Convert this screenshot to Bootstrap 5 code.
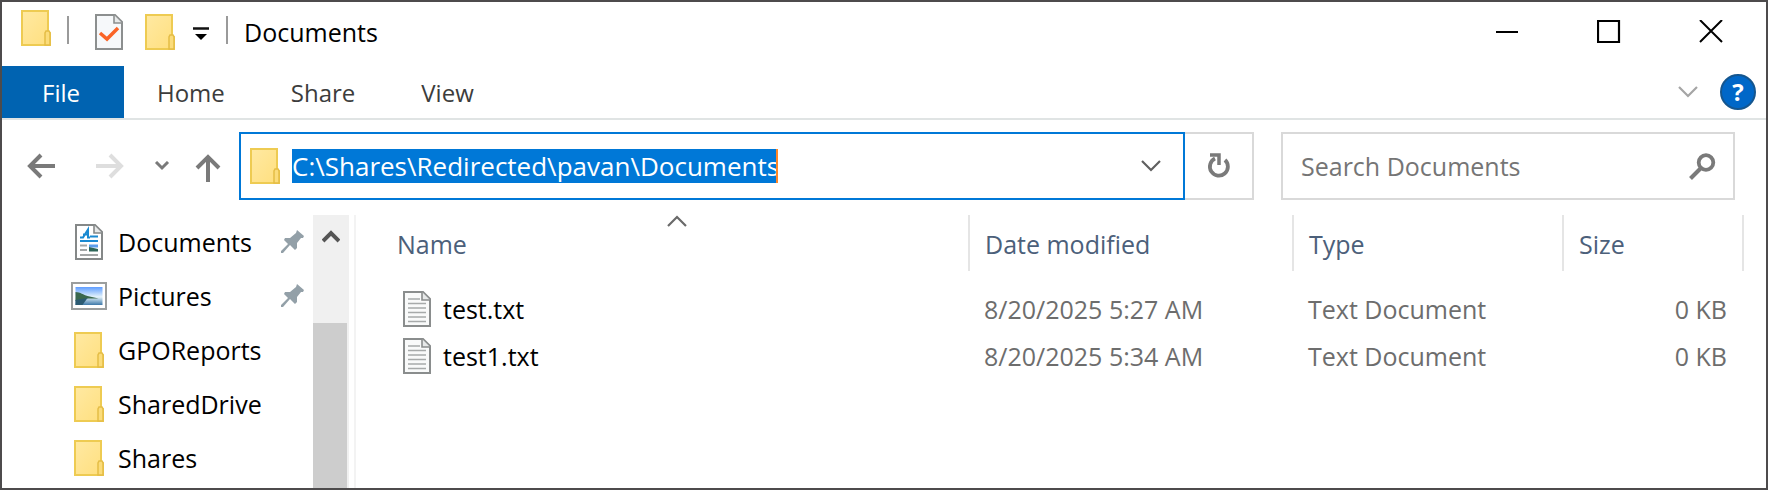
<!DOCTYPE html>
<html lang="en">
<head>
<meta charset="utf-8">
<meta name="viewport" content="width=device-width, initial-scale=1">
<title>Documents</title>
<link rel="stylesheet" href="https://cdn.jsdelivr.net/npm/bootstrap@5.3.0/dist/css/bootstrap.min.css">
<style>
  body { font-family: "Open Sans", "Noto Sans", sans-serif; font-size: 25px; line-height: 34px; color: #000; background: #fff; }
  .explorer { min-height: 100vh; border: 2px solid #4d4b4c; }
  button, input, a { font: inherit; }
  button { border: 0; padding: 0; background: transparent; color: inherit; }
  svg { display: block; flex: none; }
  .title-bar { height: 64px; padding-left: 19px; }
  .win-title { font-size: 25px; line-height: 60px; }
  .divider { width: 2px; height: 28px; background: #9a9a9a; }
  .quick { margin: 0 17px 0 26px; gap: 18px; }
  .win-btn { width: 102px; height: 60px; }
  .ribbon { height: 54px; border-bottom: 2px solid #e0e4e4; font-size: 24px; }
  .ribbon a { color: #3c3c3c; text-decoration: none; padding: 2px 33px 0 33px; }
  .ribbon a.file-tab { background: #0063b1; color: #fff; padding: 2px 44px 0 40px; }
  .help { width: 36px; height: 36px; margin-left: 22px; border-radius: 50%; background: #0067c8; border: 2px solid #15568f; color: #fff; font-weight: 700; line-height: 32px; }
  .ribbon-tools { padding-right: 10px; }
  .nav-row { padding: 12px 31px 15px 25px; }
  .arrows { width: 212px; padding-right: 18px; }
  .field-box { height: 68px; border: 2px solid #d9d9d9; }
  .address { border-color: #0078d7; padding: 0 22px 0 9px; }
  .address input { width: 486px; height: 34px; padding: 0; border: 0; border-right: 2px solid #ff8728; background: #0078d7; color: #fff; outline: 0; margin-left: 12px; font-size: 26px; }
  .refresh { width: 69px; border-left: 0; }
  .search { width: 454px; margin-left: 27px; padding: 0 17px 0 18px; }
  .search input { min-width: 0; border: 0; padding: 0; outline: 0; color: #6d6d6d; }
  .search input::placeholder { color: #757575; opacity: 1; }
  .side { width: 311px; flex: none; }
  .side a { height: 54px; color: #000; text-decoration: none; padding: 0 8px 0 69px; }
  .side .ico { width: 36px; margin-right: 11px; }
  .scroll { width: 36px; flex: none; background: #f0f0f0; }
  .scroll .thumb { width: 34px; background: #cdcdcd; }
  .scroll button { height: 108px; padding-top: 14px; }
  .pane { min-width: 0; border-left: 2px solid #f3f3f3; margin-left: 5px; padding-right: 22px; }
  .files { width: 100%; table-layout: fixed; color: #6d6d6d; }
  .files th { height: 56px; font-weight: 400; color: #4c607a; border-right: 2px solid #e5e5e5; padding: 2px 0 0 15px; position: relative; }
  .files th:first-child { padding-left: 41px; }
  .files td { height: 47px; padding: 0 0 0 15px; }
  .files td:first-child { padding-left: 47px; color: #000; }
  .files td:last-child { padding: 0 16px 0 0; text-align: right; }
  .files .gap-row td { height: 14px; }
  .sort { position: absolute; top: 0; left: 311px; }
  .c-date { width: 324px; } .c-type { width: 270px; } .c-size { width: 180px; }
</style>
</head>
<body>
<svg width="0" height="0" class="position-absolute" aria-hidden="true">
  <defs>
    <linearGradient id="yel" x1="0" y1="0" x2="1" y2="1"><stop offset="0" stop-color="#ffe9a2"/><stop offset="1" stop-color="#ffdf7e"/></linearGradient>
    <linearGradient id="sky" x1="0" y1="0" x2="0" y2="1"><stop offset="0" stop-color="#5e9dff"/><stop offset=".55" stop-color="#e4f3fb"/><stop offset="1" stop-color="#3d78a8"/></linearGradient>
    <symbol id="folder" viewBox="0 0 30 36"><path d="M1 1h26v20l2 2v12H1z" fill="url(#yel)" stroke="#eecb52" stroke-width="2"/><path d="M24 35V23l1-2h3l1 2v12z" fill="#fbdc7b" stroke="#e5bd46" stroke-width="1.5"/></symbol>
    <symbol id="textdoc" viewBox="0 0 28 36"><path d="M1 1h19l7 7v27H1z" fill="#f9fafa" stroke="#8a8d8d" stroke-width="2"/><path d="M19 1v8h8" fill="#e7e9e9" stroke="#8a8d8d" stroke-width="1.6"/><path d="M5 8h12M5 12.500h18M5 17h18M5 21.500h18M5 26h18M5 30.500h18" stroke="#a7aaaa" stroke-width="1.7"/></symbol>
    <symbol id="pin" viewBox="0 0 24 24"><path d="M16 0l7 6-1 2-2 0-4 5 0 5-2 2-5-5-7 8-2 0 0-2 7-7-4-4 1-2 5 0 6-5z" fill="#93a0a8"/></symbol>
  </defs>
</svg>
<div class="explorer d-flex flex-column">
  <header class="title-bar d-flex align-items-start">
    <div class="d-flex align-items-center pt-2 h-100 pb-3">
      <svg width="30" height="36" class="mb-1"><use href="#folder"/></svg>
      <span class="divider ms-3"></span>
      <div class="quick d-flex align-items-center pt-1">
        <button aria-label="Properties"><svg width="28" height="36" viewBox="0 0 28 36"><path d="M1 1h19l7 7v27H1z" fill="#f6f8fa" stroke="#8c8f8f" stroke-width="2"/><path d="M19 1v8h8" fill="#e7e9e9" stroke="#8c8f8f" stroke-width="1.6"/><path d="M5 19l7 6 11-11" fill="none" stroke="#fa6427" stroke-width="3.500"/></svg></button>
        <button class="ms-1" aria-label="New folder"><svg width="30" height="36"><use href="#folder"/></svg></button>
        <button aria-label="Customize Quick Access Toolbar"><svg width="16" height="14" viewBox="0 0 16 14" class="mt-1"><path d="M0 1.500h16" stroke="#111" stroke-width="2.500"/><path d="M2 7h12l-6 6z" fill="#000"/></svg></button>
      </div>
      <span class="divider"></span>
    </div>
    <h1 class="win-title m-0 ms-3 fw-normal">Documents</h1>
    <div class="d-flex ms-auto me-1">
      <button class="win-btn d-flex align-items-center justify-content-center" aria-label="Minimize"><svg width="24" height="24" viewBox="0 0 24 24"><path d="M1 12h22" stroke="#000" stroke-width="2"/></svg></button>
      <button class="win-btn d-flex align-items-center justify-content-center" aria-label="Maximize"><svg width="24" height="24" viewBox="0 0 24 24"><path d="M1 1h21v21H1z" fill="none" stroke="#000" stroke-width="2.200"/></svg></button>
      <button class="win-btn d-flex align-items-center justify-content-center" aria-label="Close"><svg width="24" height="24" viewBox="0 0 24 24"><path d="M1 0l22 22M23 0L1 22" stroke="#000" stroke-width="2"/></svg></button>
    </div>
  </header>
  <nav class="ribbon d-flex" aria-label="Ribbon">
    <a class="file-tab d-flex align-items-center" href="#">File</a>
    <a class="d-flex align-items-center" href="#">Home</a>
    <a class="d-flex align-items-center" href="#">Share</a>
    <a class="d-flex align-items-center" href="#">View</a>
    <div class="ribbon-tools d-flex align-items-center ms-auto">
      <button aria-label="Expand the Ribbon"><svg width="20" height="12" viewBox="0 0 20 12"><path d="M1 1l9 9 9-9" fill="none" stroke="#a5a5a5" stroke-width="2.200"/></svg></button>
      <button class="help" aria-label="Help">?</button>
    </div>
  </nav>
  <div class="nav-row d-flex align-items-center">
    <div class="arrows d-flex align-items-center justify-content-between">
      <button aria-label="Back"><svg width="28" height="26" viewBox="0 0 28 26"><path d="M28 13H3M14 2L3 13l11 11" fill="none" stroke="#7a7a7a" stroke-width="4"/></svg></button>
      <button class="ms-4 ps-3" aria-label="Forward"><svg width="28" height="26" viewBox="0 0 28 26"><path d="M0 13h25M14 2l11 11-11 11" fill="none" stroke="#dedede" stroke-width="4"/></svg></button>
      <button class="ms-4 ps-1" aria-label="Recent locations"><svg width="16" height="10" viewBox="0 0 16 10"><path d="M2 1l6 6 6-6" fill="none" stroke="#7a7a7a" stroke-width="3"/></svg></button>
      <button class="ms-4" aria-label="Up"><svg width="26" height="28" viewBox="0 0 26 28" class="mt-1"><path d="M13 28V3M2 14L13 3l11 11" fill="none" stroke="#7a7a7a" stroke-width="4"/></svg></button>
    </div>
    <div class="field-box address flex-fill d-flex align-items-center">
      <svg width="30" height="36"><use href="#folder"/></svg>
      <input type="text" aria-label="Address" value="C:\Shares\Redirected\pavan\Documents">
      <button class="ms-auto" aria-label="Previous locations"><svg width="20" height="12" viewBox="0 0 20 12"><path d="M1 1l9 9 9-9" fill="none" stroke="#606060" stroke-width="2.200"/></svg></button>
    </div>
    <button class="field-box refresh d-flex align-items-center justify-content-center" aria-label="Refresh"><svg width="24" height="27" viewBox="0 0 24 27"><path d="M18 7a9 9 0 1 1-10-1.500" fill="none" stroke="#7a7a7a" stroke-width="3.800"/><path d="M3 2h9v10" fill="none" stroke="#7a7a7a" stroke-width="3.500"/></svg></button>
    <div class="field-box search d-flex align-items-center">
      <input class="flex-fill" type="search" aria-label="Search Documents" placeholder="Search Documents">
      <button aria-label="Search"><svg width="27" height="27" viewBox="0 0 27 27"><circle cx="17" cy="9.500" r="7.300" fill="none" stroke="#7a7a7a" stroke-width="3.800"/><path d="M12 15L1.500 25.500" stroke="#7a7a7a" stroke-width="4"/></svg></button>
    </div>
  </div>
  <main class="d-flex flex-fill">
    <nav class="side" aria-label="Navigation pane">
      <a class="d-flex align-items-center" href="#"><span class="ico d-flex justify-content-center"><svg width="28" height="36" viewBox="0 0 28 36"><path d="M1 1h19l7 7v27H1z" fill="#fff" stroke="#858888" stroke-width="2"/><path d="M19 1v8h8" fill="#e7e9e9" stroke="#858888" stroke-width="1.600"/><path d="M5 13.500h3l5-8v8h2M8 10.500h5M15 12.500h8M5 17h18" fill="none" stroke="#1a8ad2" stroke-width="2"/><path d="M5 21.500h7M5 26h7M5 31h18" stroke="#a4a7a7" stroke-width="1.800"/><path d="M14 20.500h9v3h-9z" fill="#5d9eea"/><path d="M14 23l9 2v2.500h-9z" fill="#2e6658"/></svg></span>Documents<svg width="24" height="24" class="ms-auto"><use href="#pin"/></svg></a>
      <a class="d-flex align-items-center" href="#"><span class="ico"><svg width="36" height="28" viewBox="0 0 36 28"><path d="M1 1h34v26H1z" fill="#fff" stroke="#9b9e9e" stroke-width="2"/><path d="M4.500 5h27v18h-27z" fill="url(#sky)"/><path d="M4.500 10c5 0 8 3 12 4l11 2.500H17L4.500 19z" fill="#3a684d"/><path d="M4.500 18l12-2-5 7h-7z" fill="#2c5b72"/></svg></span>Pictures<svg width="24" height="24" class="ms-auto"><use href="#pin"/></svg></a>
      <a class="d-flex align-items-center" href="#"><span class="ico d-flex justify-content-center"><svg width="30" height="36"><use href="#folder"/></svg></span>GPOReports</a>
      <a class="d-flex align-items-center" href="#"><span class="ico d-flex justify-content-center"><svg width="30" height="36"><use href="#folder"/></svg></span>SharedDrive</a>
      <a class="d-flex align-items-center" href="#"><span class="ico d-flex justify-content-center"><svg width="30" height="36"><use href="#folder"/></svg></span>Shares</a>
    </nav>
    <div class="scroll d-flex flex-column">
      <button class="d-flex justify-content-center align-items-start" aria-label="Scroll up"><svg width="18" height="14" viewBox="0 0 18 14"><path d="M1 12l8-8 8 8" fill="none" stroke="#555" stroke-width="4"/></svg></button>
      <div class="thumb flex-fill"></div>
    </div>
    <section class="pane flex-fill">
      <table class="files">
        <colgroup><col><col class="c-date"><col class="c-type"><col class="c-size"></colgroup>
        <thead>
          <tr><th scope="col">Name<svg class="sort" width="20" height="12" viewBox="0 0 20 12"><path d="M1 11l9-9 9 9" fill="none" stroke="#6a6a6a" stroke-width="2.200"/></svg></th><th scope="col">Date modified</th><th scope="col">Type</th><th scope="col">Size</th></tr>
        </thead>
        <tbody>
          <tr class="gap-row" aria-hidden="true"><td colspan="4"></td></tr>
          <tr><td><span class="d-flex align-items-center gap-2"><svg width="28" height="36" class="me-1"><use href="#textdoc"/></svg>test.txt</span></td><td>8/20/2025 5:27 AM</td><td>Text Document</td><td>0 KB</td></tr>
          <tr><td><span class="d-flex align-items-center gap-2"><svg width="28" height="36" class="me-1"><use href="#textdoc"/></svg>test1.txt</span></td><td>8/20/2025 5:34 AM</td><td>Text Document</td><td>0 KB</td></tr>
        </tbody>
      </table>
    </section>
  </main>
</div>
<script src="https://cdn.jsdelivr.net/npm/bootstrap@5.3.0/dist/js/bootstrap.bundle.min.js"></script>
</body>
</html>
